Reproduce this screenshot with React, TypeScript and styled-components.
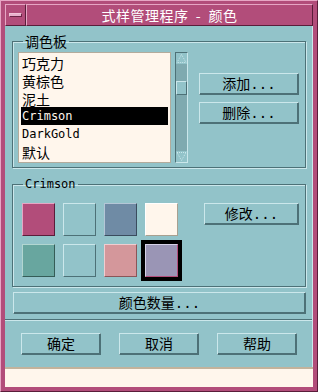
import React from 'react';
import styled, { createGlobalStyle } from 'styled-components';

const teal = '#92c3c9';
const light = '#cbe7eb';
const dark = '#4d7177';
const cream = '#fff6ec';
const magenta = '#b24d7a';

const GlobalStyle = createGlobalStyle`
  html, body {
    margin: 0;
    padding: 0;
    background: ${magenta};
  }
`;

const Window = styled.div`
  box-sizing: border-box;
  width: 318px;
  height: 392px;
  display: flex;
  flex-direction: column;
  padding: 3px 4px 4px 4px;
  background: ${magenta};
  border: 1px solid;
  border-color: #e6a6c4 #5a1d3a #5a1d3a #e6a6c4;
  font-family: 'Noto Sans CJK SC', sans-serif;
  font-size: 14px;
  color: #000;
`;

const TitleBar = styled.div`
  display: flex;
  height: 22px;
`;

const MenuButton = styled.div`
  box-sizing: border-box;
  width: 21px;
  display: flex;
  align-items: center;
  justify-content: center;
  border: 1px solid;
  border-color: #e6a6c4 #5a1d3a #5a1d3a #e6a6c4;
`;

const MenuDash = styled.div`
  width: 11px;
  height: 2px;
  background: #e8b0cc;
  border: 1px solid #6a2445;
  border-top-color: #f0c4d8;
  border-left-color: #f0c4d8;
`;

const TitleText = styled.div`
  box-sizing: border-box;
  flex: 1;
  display: flex;
  align-items: center;
  justify-content: center;
  color: #fff;
  font-size: 14px;
  letter-spacing: 0.5px;
  white-space: pre;
  border: 1px solid;
  border-color: #e6a6c4 #5a1d3a #5a1d3a #e6a6c4;
`;

const Content = styled.div`
  box-sizing: border-box;
  flex: 1;
  display: flex;
  flex-direction: column;
  background: ${teal};
  border-right: 1px solid ${light};
  padding-top: 7px;
`;

const Group = styled.fieldset<{ $pb: number; $mt?: number }>`
  margin: ${(p) => p.$mt ?? 0}px 6px 0 7px;
  padding: 3px 6px ${(p) => p.$pb}px 5px;
  border: 1px solid ${dark};
  box-shadow: 1px 1px 0 ${light}, inset 1px 1px 0 ${light};
  display: flex;
  min-width: 0;
`;

const Legend = styled.legend<{ $latin?: boolean }>`
  margin-left: 5px;
  padding: 0 2px;
  line-height: 16px;
  font-family: ${(p) => (p.$latin ? "'DejaVu Sans Mono', monospace" : "'Noto Sans CJK SC', sans-serif")};
  font-size: ${(p) => (p.$latin ? '12px' : '14px')};
`;

const PaletteRow = styled.div`
  display: flex;
  width: 100%;
`;

const List = styled.div`
  box-sizing: border-box;
  width: 153px;
  height: 111px;
  background: ${cream};
  border: 1px solid #b3ab9c;
  padding: 1px 2px;
  display: flex;
  flex-direction: column;
`;

const Item = styled.div<{ $latin?: boolean; $selected?: boolean }>`
  height: 18px;
  line-height: 18px;
  padding-left: 1px;
  white-space: nowrap;
  overflow: hidden;
  background: ${(p) => (p.$selected ? '#000' : 'transparent')};
  color: ${(p) => (p.$selected ? cream : '#000')};
  font-family: ${(p) => (p.$latin ? "'DejaVu Sans Mono', monospace" : "'Noto Sans CJK SC', sans-serif")};
  font-size: ${(p) => (p.$latin ? '12px' : '14px')};
`;

const ScrollBar = styled.div`
  box-sizing: border-box;
  width: 13px;
  height: 111px;
  margin-left: 4px;
  background: #7faab0;
  border: 1px solid;
  border-color: ${dark} ${light} ${light} ${dark};
  display: flex;
  flex-direction: column;
`;

const Arrow = styled.div`
  height: 11px;
  display: flex;
  background: ${teal};
`;

const Track = styled.div`
  flex: 1;
  padding-top: 17px;
`;

const Thumb = styled.div`
  box-sizing: border-box;
  height: 14px;
  background: ${teal};
  border: 1px solid;
  border-color: ${light} ${dark} ${dark} ${light};
`;

const SideButtons = styled.div`
  display: flex;
  flex-direction: column;
  gap: 7px;
  margin-left: auto;
  padding-top: 21px;
`;

const Button = styled.button<{ $w?: number }>`
  box-sizing: border-box;
  width: ${(p) => (p.$w ? `${p.$w}px` : '100%')};
  height: 22px;
  margin: 0;
  padding: 0;
  background: ${teal};
  border: 1px solid;
  border-color: ${light} ${dark} ${dark} ${light};
  box-shadow: inset -1px -1px 0 ${dark};
  font-family: 'DejaVu Sans Mono', 'Noto Sans CJK SC', monospace;
  font-size: 14px;
  line-height: 20px;
  color: #000;
  letter-spacing: 0;
`;

const SwatchGrid = styled.div`
  display: grid;
  grid-template-columns: repeat(4, 33px);
  grid-auto-rows: 33px;
  gap: 8px;
  margin: 8px 0 0 4px;
`;

const Swatch = styled.div<{ $color: string; $hi: string; $lo: string; $selected?: boolean }>`
  box-sizing: border-box;
  background: ${(p) => p.$color};
  border: 1px solid;
  border-color: ${(p) => `${p.$hi} ${p.$lo} ${p.$lo} ${p.$hi}`};
  outline: ${(p) => (p.$selected ? '4px solid #000' : 'none')};
`;

const ModifyWrap = styled.div`
  margin: 8px 0 0 auto;
`;

const WideButtonWrap = styled.div`
  margin: 5px 6px 0 8px;
`;

const Separator = styled.div`
  margin-top: 5px;
  height: 1px;
  background: ${dark};
  border-bottom: 1px solid ${light};
`;

const ActionRow = styled.div`
  display: flex;
  gap: 18px;
  padding: 12px 0 0 16px;
`;

const Status = styled.div`
  height: 18px;
  background: ${cream};
  border-top: 2px solid #c3b39c;
`;

const ArrowIcon: React.FC<{ up?: boolean }> = ({ up }) => (
  <svg width="11" height="11" viewBox="0 0 11 11">
    {up ? (
      <polygon points="5.5,1.5 10,9.5 1,9.5" fill={teal} stroke={light} strokeDasharray="1 1" />
    ) : (
      <polygon points="1,1.5 10,1.5 5.5,9.5" fill={teal} stroke={light} strokeDasharray="1 1" />
    )}
  </svg>
);

const swatches = [
  { color: magenta, hi: '#e6a6c4', lo: '#5a1d3a' },
  { color: teal, hi: light, lo: dark },
  { color: '#6f8ba5', hi: '#b4c6d6', lo: '#3a4c5e' },
  { color: cream, hi: '#ffffff', lo: '#a8a090' },
  { color: '#68a69f', hi: '#b2d6d1', lo: '#355c57' },
  { color: teal, hi: light, lo: dark },
  { color: '#d4979b', hi: '#f0cdd0', lo: '#8a5558' },
  { color: '#9a95b5', hi: '#d6d2e8', lo: magenta, selected: true },
];

export default function App() {
  return (
    <>
      <GlobalStyle />
      <Window>
        <TitleBar>
          <MenuButton>
            <MenuDash />
          </MenuButton>
          <TitleText>式样管理程序  -  颜色</TitleText>
        </TitleBar>
        <Content>
          <Group $pb={4}>
            <Legend>调色板</Legend>
            <PaletteRow>
              <List>
                <Item>巧克力</Item>
                <Item>黄棕色</Item>
                <Item>泥土</Item>
                <Item $latin $selected>Crimson</Item>
                <Item $latin>DarkGold</Item>
                <Item>默认</Item>
              </List>
              <ScrollBar>
                <Arrow>
                  <ArrowIcon up />
                </Arrow>
                <Track>
                  <Thumb />
                </Track>
                <Arrow>
                  <ArrowIcon />
                </Arrow>
              </ScrollBar>
              <SideButtons>
                <Button $w={100}>添加...</Button>
                <Button $w={100}>删除...</Button>
              </SideButtons>
            </PaletteRow>
          </Group>
          <Group $pb={9} $mt={8}>
            <Legend $latin>Crimson</Legend>
            <SwatchGrid>
              {swatches.map((s, i) => (
                <Swatch key={i} $color={s.color} $hi={s.hi} $lo={s.lo} $selected={s.selected} />
              ))}
            </SwatchGrid>
            <ModifyWrap>
              <Button $w={95}>修改...</Button>
            </ModifyWrap>
          </Group>
          <WideButtonWrap>
            <Button>颜色数量...</Button>
          </WideButtonWrap>
          <Separator />
          <ActionRow>
            <Button $w={80}>确定</Button>
            <Button $w={80}>取消</Button>
            <Button $w={80}>帮助</Button>
          </ActionRow>
        </Content>
        <Status />
      </Window>
    </>
  );
}
